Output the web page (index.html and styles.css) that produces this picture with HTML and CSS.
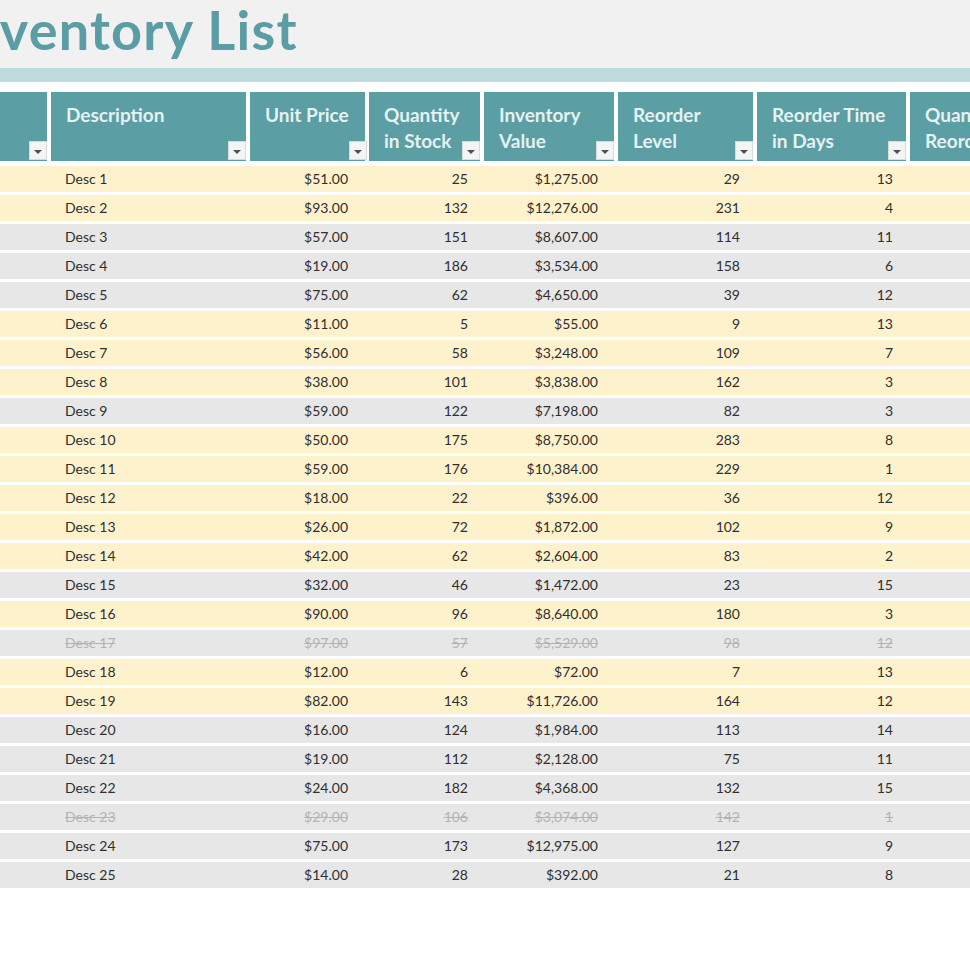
FILE: index.html
```html
<!DOCTYPE html>
<html lang="en">
<head>
<meta charset="utf-8">
<title>Inventory List</title>
<link rel="stylesheet" href="styles.css">
</head>
<body>
<div class="viewport">
  <div class="title-bar"><h1 class="title">Inventory List</h1></div>
  <div class="band"></div>
  <div class="sheet">
    <div class="head">
      <div class="hcell"><span class="htext"></span><span class="dd"></span></div>
      <div class="hcell"><span class="htext">Description</span><span class="dd"></span></div>
      <div class="hcell"><span class="htext">Unit Price</span><span class="dd"></span></div>
      <div class="hcell"><span class="htext">Quantity<br>in Stock</span><span class="dd"></span></div>
      <div class="hcell"><span class="htext">Inventory<br>Value</span><span class="dd"></span></div>
      <div class="hcell"><span class="htext">Reorder<br>Level</span><span class="dd"></span></div>
      <div class="hcell"><span class="htext">Reorder Time<br>in Days</span><span class="dd"></span></div>
      <div class="hcell"><span class="htext">Quantity in<br>Reorder</span><span class="dd"></span></div>
    </div>
    <div class="rows">
      <div class="row low"><span></span><span class="desc">Desc 1</span><span class="num price">$51.00</span><span class="num qty">25</span><span class="num val">$1,275.00</span><span class="num lvl">29</span><span class="num days">13</span><span></span></div>
      <div class="row low"><span></span><span class="desc">Desc 2</span><span class="num price">$93.00</span><span class="num qty">132</span><span class="num val">$12,276.00</span><span class="num lvl">231</span><span class="num days">4</span><span></span></div>
      <div class="row"><span></span><span class="desc">Desc 3</span><span class="num price">$57.00</span><span class="num qty">151</span><span class="num val">$8,607.00</span><span class="num lvl">114</span><span class="num days">11</span><span></span></div>
      <div class="row"><span></span><span class="desc">Desc 4</span><span class="num price">$19.00</span><span class="num qty">186</span><span class="num val">$3,534.00</span><span class="num lvl">158</span><span class="num days">6</span><span></span></div>
      <div class="row"><span></span><span class="desc">Desc 5</span><span class="num price">$75.00</span><span class="num qty">62</span><span class="num val">$4,650.00</span><span class="num lvl">39</span><span class="num days">12</span><span></span></div>
      <div class="row low"><span></span><span class="desc">Desc 6</span><span class="num price">$11.00</span><span class="num qty">5</span><span class="num val">$55.00</span><span class="num lvl">9</span><span class="num days">13</span><span></span></div>
      <div class="row low"><span></span><span class="desc">Desc 7</span><span class="num price">$56.00</span><span class="num qty">58</span><span class="num val">$3,248.00</span><span class="num lvl">109</span><span class="num days">7</span><span></span></div>
      <div class="row low"><span></span><span class="desc">Desc 8</span><span class="num price">$38.00</span><span class="num qty">101</span><span class="num val">$3,838.00</span><span class="num lvl">162</span><span class="num days">3</span><span></span></div>
      <div class="row"><span></span><span class="desc">Desc 9</span><span class="num price">$59.00</span><span class="num qty">122</span><span class="num val">$7,198.00</span><span class="num lvl">82</span><span class="num days">3</span><span></span></div>
      <div class="row low"><span></span><span class="desc">Desc 10</span><span class="num price">$50.00</span><span class="num qty">175</span><span class="num val">$8,750.00</span><span class="num lvl">283</span><span class="num days">8</span><span></span></div>
      <div class="row low"><span></span><span class="desc">Desc 11</span><span class="num price">$59.00</span><span class="num qty">176</span><span class="num val">$10,384.00</span><span class="num lvl">229</span><span class="num days">1</span><span></span></div>
      <div class="row low"><span></span><span class="desc">Desc 12</span><span class="num price">$18.00</span><span class="num qty">22</span><span class="num val">$396.00</span><span class="num lvl">36</span><span class="num days">12</span><span></span></div>
      <div class="row low"><span></span><span class="desc">Desc 13</span><span class="num price">$26.00</span><span class="num qty">72</span><span class="num val">$1,872.00</span><span class="num lvl">102</span><span class="num days">9</span><span></span></div>
      <div class="row low"><span></span><span class="desc">Desc 14</span><span class="num price">$42.00</span><span class="num qty">62</span><span class="num val">$2,604.00</span><span class="num lvl">83</span><span class="num days">2</span><span></span></div>
      <div class="row"><span></span><span class="desc">Desc 15</span><span class="num price">$32.00</span><span class="num qty">46</span><span class="num val">$1,472.00</span><span class="num lvl">23</span><span class="num days">15</span><span></span></div>
      <div class="row low"><span></span><span class="desc">Desc 16</span><span class="num price">$90.00</span><span class="num qty">96</span><span class="num val">$8,640.00</span><span class="num lvl">180</span><span class="num days">3</span><span></span></div>
      <div class="row gone"><span></span><span class="desc">Desc 17</span><span class="num price">$97.00</span><span class="num qty">57</span><span class="num val">$5,529.00</span><span class="num lvl">98</span><span class="num days">12</span><span></span></div>
      <div class="row low"><span></span><span class="desc">Desc 18</span><span class="num price">$12.00</span><span class="num qty">6</span><span class="num val">$72.00</span><span class="num lvl">7</span><span class="num days">13</span><span></span></div>
      <div class="row low"><span></span><span class="desc">Desc 19</span><span class="num price">$82.00</span><span class="num qty">143</span><span class="num val">$11,726.00</span><span class="num lvl">164</span><span class="num days">12</span><span></span></div>
      <div class="row"><span></span><span class="desc">Desc 20</span><span class="num price">$16.00</span><span class="num qty">124</span><span class="num val">$1,984.00</span><span class="num lvl">113</span><span class="num days">14</span><span></span></div>
      <div class="row"><span></span><span class="desc">Desc 21</span><span class="num price">$19.00</span><span class="num qty">112</span><span class="num val">$2,128.00</span><span class="num lvl">75</span><span class="num days">11</span><span></span></div>
      <div class="row"><span></span><span class="desc">Desc 22</span><span class="num price">$24.00</span><span class="num qty">182</span><span class="num val">$4,368.00</span><span class="num lvl">132</span><span class="num days">15</span><span></span></div>
      <div class="row gone"><span></span><span class="desc">Desc 23</span><span class="num price">$29.00</span><span class="num qty">106</span><span class="num val">$3,074.00</span><span class="num lvl">142</span><span class="num days">1</span><span></span></div>
      <div class="row"><span></span><span class="desc">Desc 24</span><span class="num price">$75.00</span><span class="num qty">173</span><span class="num val">$12,975.00</span><span class="num lvl">127</span><span class="num days">9</span><span></span></div>
      <div class="row"><span></span><span class="desc">Desc 25</span><span class="num price">$14.00</span><span class="num qty">28</span><span class="num val">$392.00</span><span class="num lvl">21</span><span class="num days">8</span><span></span></div>
    </div>
  </div>
</div>
</body>
</html>
```

FILE: styles.css
```css
html, body {
  margin: 0;
  padding: 0;
  background: #ffffff;
}

.viewport {
  width: 970px;
  height: 970px;
  overflow: hidden;
  background: #ffffff;
  font-family: "Lato", "Liberation Sans", sans-serif;
}

.title-bar {
  height: 68px;
  background: #f1f1f1;
  box-sizing: border-box;
  padding-top: 2px;
}

.title {
  margin: 0 0 0 -48px;
  font-size: 54px;
  line-height: 56px;
  font-weight: 700;
  letter-spacing: 1.2px;
  color: #5a9da4;
  white-space: nowrap;
}

.band {
  height: 14px;
  background: #bedadd;
}

.sheet {
  margin: 10px 0 0 -60px;
  width: 1120px;
}

.head,
.row {
  display: grid;
  grid-template-columns: 111px 199px 119px 115px 134px 139px 153px 150px;
}

.head {
  height: 69px;
}

.hcell {
  display: flex;
  justify-content: space-between;
  box-sizing: border-box;
  padding: 10px 0 1px 15px;
  background: #5b9ea4;
  background-clip: padding-box;
  border-right: 4px solid #ffffff;
  min-width: 0;
}

.htext {
  align-self: flex-start;
  font-size: 19px;
  line-height: 26px;
  font-weight: 700;
  color: #e4f2f2;
  white-space: nowrap;
}

.dd {
  align-self: flex-end;
  flex-shrink: 0;
  width: 18px;
  height: 19px;
  box-sizing: border-box;
  background: #f4f4f4;
  border: 1px solid #d6dcdc;
  display: flex;
  align-items: center;
  justify-content: center;
}

.dd::after {
  content: "";
  width: 0;
  height: 0;
  border-left: 4px solid transparent;
  border-right: 4px solid transparent;
  border-top: 4px solid #505050;
  margin-top: 2px;
}

.rows {
  display: flex;
  flex-direction: column;
  gap: 3px;
  margin-top: 5px;
}

.row {
  height: 26px;
  background: #e7e7e7;
  font-size: 14px;
  line-height: 26px;
  color: #2f2f2f;
}

.row.low {
  background: #fef2cd;
}

.row.gone {
  color: #b3b3b3;
  text-decoration: line-through;
}

.row > span {
  white-space: nowrap;
}

.desc {
  padding-left: 14px;
}

.num {
  text-align: right;
}

.price { padding-right: 21px; }
.qty { padding-right: 16px; }
.val { padding-right: 20px; }
.lvl { padding-right: 17px; }
.days { padding-right: 17px; }
```
